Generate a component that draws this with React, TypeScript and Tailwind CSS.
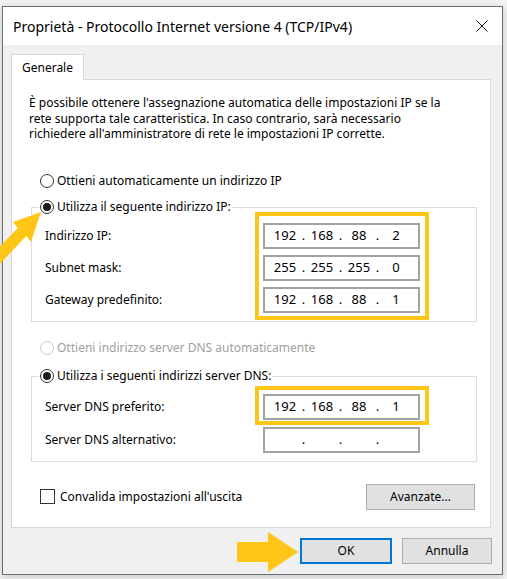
import React from 'react';

const Radio: React.FC<{ checked?: boolean; disabled?: boolean }> = ({ checked, disabled }) => (
  <span
    className={`flex h-[14px] w-[14px] shrink-0 items-center justify-center rounded-full border bg-white ${
      disabled ? 'border-[#cccccc]' : 'border-[#333333]'
    }`}
  >
    {checked && <span className="h-[8px] w-[8px] rounded-full bg-[#1c1c1c]" />}
  </span>
);

const IpField: React.FC<{ parts: string[] }> = ({ parts }) => (
  <div className="flex h-[26px] w-[157px] items-center border-2 border-[#a3a3a3] bg-white pl-[5px] text-[13px] leading-none text-black">
    {parts.map((p, i) => (
      <React.Fragment key={i}>
        {i > 0 && <span className="w-[7px] text-center">.</span>}
        <span className="w-[30px] text-center">{p}</span>
      </React.Fragment>
    ))}
  </div>
);

const Label: React.FC<{ children: React.ReactNode }> = ({ children }) => (
  <div className="flex h-[26px] items-center">{children}</div>
);

// group box header sitting on the top border
const GroupHeader: React.FC<{ children: React.ReactNode }> = ({ children }) => (
  <div className="-mt-[9px] ml-[7px] flex h-[16px] w-fit items-center gap-[3px] bg-white px-[1px]">
    <Radio checked />
    <span>{children}</span>
  </div>
);

export default function App() {
  return (
    <div className="relative h-[579px] w-[507px] overflow-hidden bg-[#f3f3f3] pl-[2px] pt-[6px] font-['Noto_Sans',sans-serif] text-[12px] text-black">
      <div className="flex h-[569px] w-[501px] flex-col border border-[#6e6e6e] bg-[#f0f0f0] shadow-[0_2px_8px_rgba(0,0,0,0.18)]">
        {/* title bar */}
        <div className="flex h-[38px] items-center justify-between bg-white pl-[10px] pr-[14px]">
          <span className="text-[14px] text-black">Proprietà - Protocollo Internet versione 4 (TCP/IPv4)</span>
          <svg width="12" height="12" viewBox="0 0 12 12">
            <path d="M0.5 0.5 L11.5 11.5 M11.5 0.5 L0.5 11.5" stroke="#111" strokeWidth="1" />
          </svg>
        </div>

        <div className="px-[8px] pt-[9px]">
          <div className="relative z-10 -mb-px flex h-[26px] w-[73px] items-center justify-center border border-b-0 border-[#d9d9d9] bg-white">
            Generale
          </div>
          <div className="h-[449px] w-[480px] border border-[#d9d9d9] bg-white">
            <p className="pl-[17px] pt-[15px] leading-[15.5px]">
              È possibile ottenere l'assegnazione automatica delle impostazioni IP se la
              <br />
              rete supporta tale caratteristica. In caso contrario, sarà necessario
              <br />
              richiedere all'amministratore di rete le impostazioni IP corrette.
            </p>

            <div className="mt-[31px] flex h-[16px] items-center gap-[3px] pl-[28px]">
              <Radio />
              <span>Ottieni automaticamente un indirizzo IP</span>
            </div>

            <div className="ml-[19px] mt-[18px] w-[446px] border border-[#dcdcdc]">
              <GroupHeader>Utilizza il seguente indirizzo IP:</GroupHeader>
              <div className="-mt-[3px] flex pb-[1px] pl-[13px]">
                <div className="flex w-[210px] flex-col gap-[6px] pt-[11px]">
                  <Label>Indirizzo IP:</Label>
                  <Label>Subnet mask:</Label>
                  <Label>Gateway predefinito:</Label>
                </div>
                <div className="flex w-[174px] flex-col gap-[6px] border-4 border-[#ffc517] pb-[3px] pl-[4px] pt-[7px]">
                  <IpField parts={['192', '168', '88', '2']} />
                  <IpField parts={['255', '255', '255', '0']} />
                  <IpField parts={['192', '168', '88', '1']} />
                </div>
              </div>
            </div>

            <div className="mt-[18px] flex h-[16px] items-center gap-[3px] pl-[28px] text-[#a0a0a0]">
              <Radio disabled />
              <span>Ottieni indirizzo server DNS automaticamente</span>
            </div>

            <div className="ml-[19px] mt-[20px] w-[446px] border border-[#dcdcdc]">
              <GroupHeader>Utilizza i seguenti indirizzi server DNS:</GroupHeader>
              <div className="mt-[2px] grid grid-cols-[210px_174px] pb-[8px] pl-[13px]">
                <div className="flex items-center pt-[3px]">Server DNS preferito:</div>
                <div className="border-4 border-[#ffc517] pb-[1px] pl-[4px] pt-[4px]">
                  <IpField parts={['192', '168', '88', '1']} />
                </div>
                <div className="mt-[2px] flex items-center">Server DNS alternativo:</div>
                <div className="mt-[2px] pl-[8px]">
                  <IpField parts={['', '', '', '']} />
                </div>
              </div>
            </div>

            <div className="mt-[22px] flex items-center justify-between pl-[28px] pr-[15px]">
              <div className="flex items-center gap-[5px]">
                <span className="h-[15px] w-[15px] border border-[#333333] bg-white" />
                <span>Convalida impostazioni all'uscita</span>
              </div>
              <button className="h-[26px] w-[109px] border border-[#adadad] bg-[#e1e1e1] text-black">
                Avanzate...
              </button>
            </div>
          </div>
        </div>

        <div className="mt-[10px] flex justify-end gap-[10px] pr-[10px]">
          <button className="h-[26px] w-[92px] border-2 border-[#0078d7] bg-[#e1e1e1] text-black">OK</button>
          <button className="h-[26px] w-[90px] border border-[#adadad] bg-[#e1e1e1] text-black">Annulla</button>
        </div>
      </div>

      {/* highlight arrows */}
      <svg className="absolute left-0 top-[195px]" width="50" height="80" viewBox="0 0 50 80">
        <polygon points="41,17 13,27 17.7,32.9 -9.8,61.9 -1.2,70.1 26.3,41.1 31,47" fill="#ffc517" />
      </svg>
      <svg className="absolute left-[237px] top-[532px]" width="62" height="41" viewBox="0 0 62 41">
        <polygon points="0,10 31,10 31,0 61,20 31,40 31,30 0,30" fill="#ffc517" />
      </svg>
    </div>
  );
}
